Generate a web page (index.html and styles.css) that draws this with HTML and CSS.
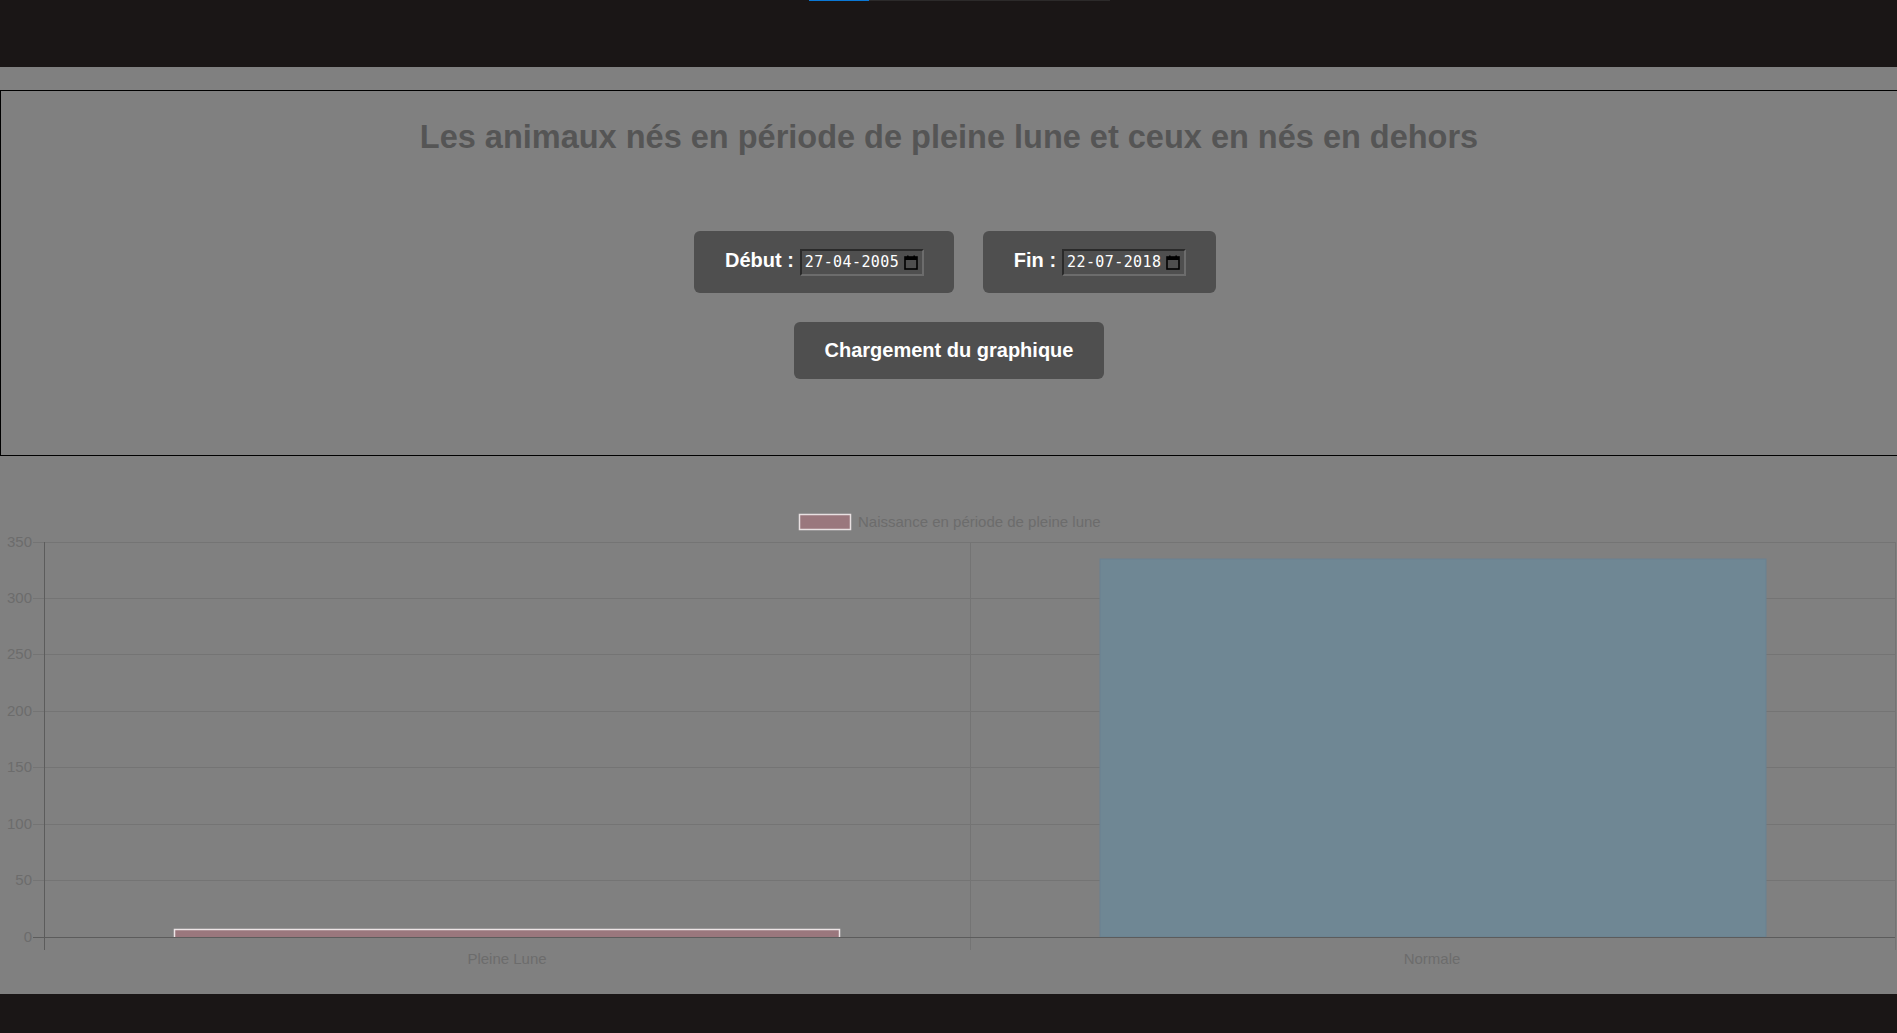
FILE: index.html
```html
<!DOCTYPE html>
<html lang="fr">
<head>
<meta charset="utf-8">
<title>Pleine lune</title>
<link rel="stylesheet" href="styles.css">
</head>
<body>
<header class="topbar">
  <div class="progress"><div class="progress-fill"></div></div>
</header>

<section class="panel">
  <h1 class="title">Les animaux nés en période de pleine lune et ceux en nés en dehors</h1>
  <div class="dates">
    <div class="date-card">
      <span class="date-label">Début :</span>
      <span class="date-input"><span class="date-text">27-04-2005</span><svg class="cal" viewBox="0 0 14 15" width="14" height="15"><rect x="1" y="2" width="12" height="12" fill="none" stroke="#000" stroke-width="1.6"/><rect x="1" y="2" width="12" height="3" fill="#000"/><rect x="3" y="0.5" width="1.6" height="3" fill="#000"/><rect x="9.4" y="0.5" width="1.6" height="3" fill="#000"/></svg></span>
    </div>
    <div class="date-card">
      <span class="date-label">Fin :</span>
      <span class="date-input"><span class="date-text">22-07-2018</span><svg class="cal" viewBox="0 0 14 15" width="14" height="15"><rect x="1" y="2" width="12" height="12" fill="none" stroke="#000" stroke-width="1.6"/><rect x="1" y="2" width="12" height="3" fill="#000"/><rect x="3" y="0.5" width="1.6" height="3" fill="#000"/><rect x="9.4" y="0.5" width="1.6" height="3" fill="#000"/></svg></span>
    </div>
  </div>
  <button class="load-btn" type="button">Chargement du graphique</button>
</section>

<section class="chart">
  <svg class="chart-svg" width="1897" height="538" viewBox="0 0 1897 538">
    <!-- legend -->
    <rect x="799.5" y="58.5" width="51" height="15" fill="#9a777d" stroke="#e8e0e1" stroke-width="1.5"/>
    <text class="lbl" x="858" y="71">Naissance en période de pleine lune</text>

    <!-- grid -->
    <g stroke="#747474" stroke-width="1">
      <line x1="33" y1="86.5" x2="1895" y2="86.5"/>
      <line x1="33" y1="142.5" x2="1895" y2="142.5"/>
      <line x1="33" y1="198.5" x2="1895" y2="198.5"/>
      <line x1="33" y1="255.5" x2="1895" y2="255.5"/>
      <line x1="33" y1="311.5" x2="1895" y2="311.5"/>
      <line x1="33" y1="368.5" x2="1895" y2="368.5"/>
      <line x1="33" y1="424.5" x2="1895" y2="424.5"/>
      <line x1="970.5" y1="86" x2="970.5" y2="494"/>
      <line x1="1895.5" y1="86" x2="1895.5" y2="494"/>
    </g>

    <!-- y labels -->
    <g class="lbl" text-anchor="end">
      <text x="32" y="91">350</text>
      <text x="32" y="147">300</text>
      <text x="32" y="203">250</text>
      <text x="32" y="260">200</text>
      <text x="32" y="316">150</text>
      <text x="32" y="373">100</text>
      <text x="32" y="429">50</text>
      <text x="32" y="486">0</text>
    </g>

    <!-- bars -->
    <rect x="1100" y="103" width="666" height="378" fill="#6f8794" stroke="#6a8090" stroke-width="1"/>
    <rect x="174" y="473" width="666" height="8" fill="#9a777d"/>
    <path d="M174.5 481 V473.5 H839.5 V481" fill="none" stroke="#ece4e5" stroke-width="1.5"/>

    <!-- axes -->
    <g stroke="#5c5c5c" stroke-width="1">
      <line x1="33" y1="481.5" x2="1895" y2="481.5"/>
      <line x1="44.5" y1="86" x2="44.5" y2="494"/>
    </g>

    <!-- x labels -->
    <g class="lbl" text-anchor="middle">
      <text x="507" y="508">Pleine Lune</text>
      <text x="1432" y="508">Normale</text>
    </g>
  </svg>
</section>

<footer class="bottombar"></footer>
</body>
</html>
```
FILE: styles.css
```css
html, body {
  margin: 0;
  padding: 0;
}
body {
  background: #808080;
  font-family: "Liberation Sans", Arial, sans-serif;
  overflow: hidden;
  height: 1033px;
}

.topbar {
  height: 67px;
  background: #1a1616;
}
.progress {
  margin-left: 809px;
  width: 301px;
  height: 1px;
  background: #2c2a2a;
}
.progress-fill {
  width: 60px;
  height: 1px;
  background: #0a78d6;
}

.panel {
  margin-top: 23px;
  border: 1px solid #000;
  border-right: none;
  height: 364px;
  box-sizing: content-box;
  display: flex;
  flex-direction: column;
  align-items: center;
}
.title {
  margin: 28px 0 0;
  font-size: 32.5px;
  font-weight: bold;
  color: #555555;
  line-height: 37px;
  height: 37px;
}
.dates {
  margin-top: 75px;
  display: flex;
  gap: 29px;
  padding-left: 12px;
}
.date-card {
  height: 62px;
  box-sizing: border-box;
  background: #4f4f4f;
  border-radius: 6px;
  padding: 0 30px 0 31px;
  display: flex;
  align-items: center;
  gap: 6px;
}
.date-label {
  color: #ffffff;
  font-weight: bold;
  font-size: 20px;
  position: relative;
  top: -2px;
}
.date-input {
  display: flex;
  align-items: center;
  width: 124px;
  height: 27px;
  box-sizing: border-box;
  border: 2px solid;
  border-color: #2a2a2a #6c6c6c #6c6c6c #2a2a2a;
  background: #4f4f4f;
  padding: 0 4px 0 3px;
  justify-content: space-between;
}
.date-text {
  color: #ffffff;
  font-family: "DejaVu Sans Mono", "Liberation Mono", monospace;
  font-size: 15px;
  letter-spacing: 0.4px;
}
.cal {
  display: block;
  flex: none;
}

.load-btn {
  margin-top: 29px;
  height: 57px;
  padding: 0 31px;
  background: #4f4f4f;
  color: #ffffff;
  border: none;
  border-radius: 6px;
  font-family: "Liberation Sans", Arial, sans-serif;
  font-size: 20px;
  font-weight: bold;
}

.chart {
  height: 538px;
}
.chart-svg {
  display: block;
}
.lbl {
  font-family: "Liberation Sans", Arial, sans-serif;
  font-size: 15px;
  fill: #6c6c6c;
}

.bottombar {
  height: 39px;
  background: #1a1616;
}
```
